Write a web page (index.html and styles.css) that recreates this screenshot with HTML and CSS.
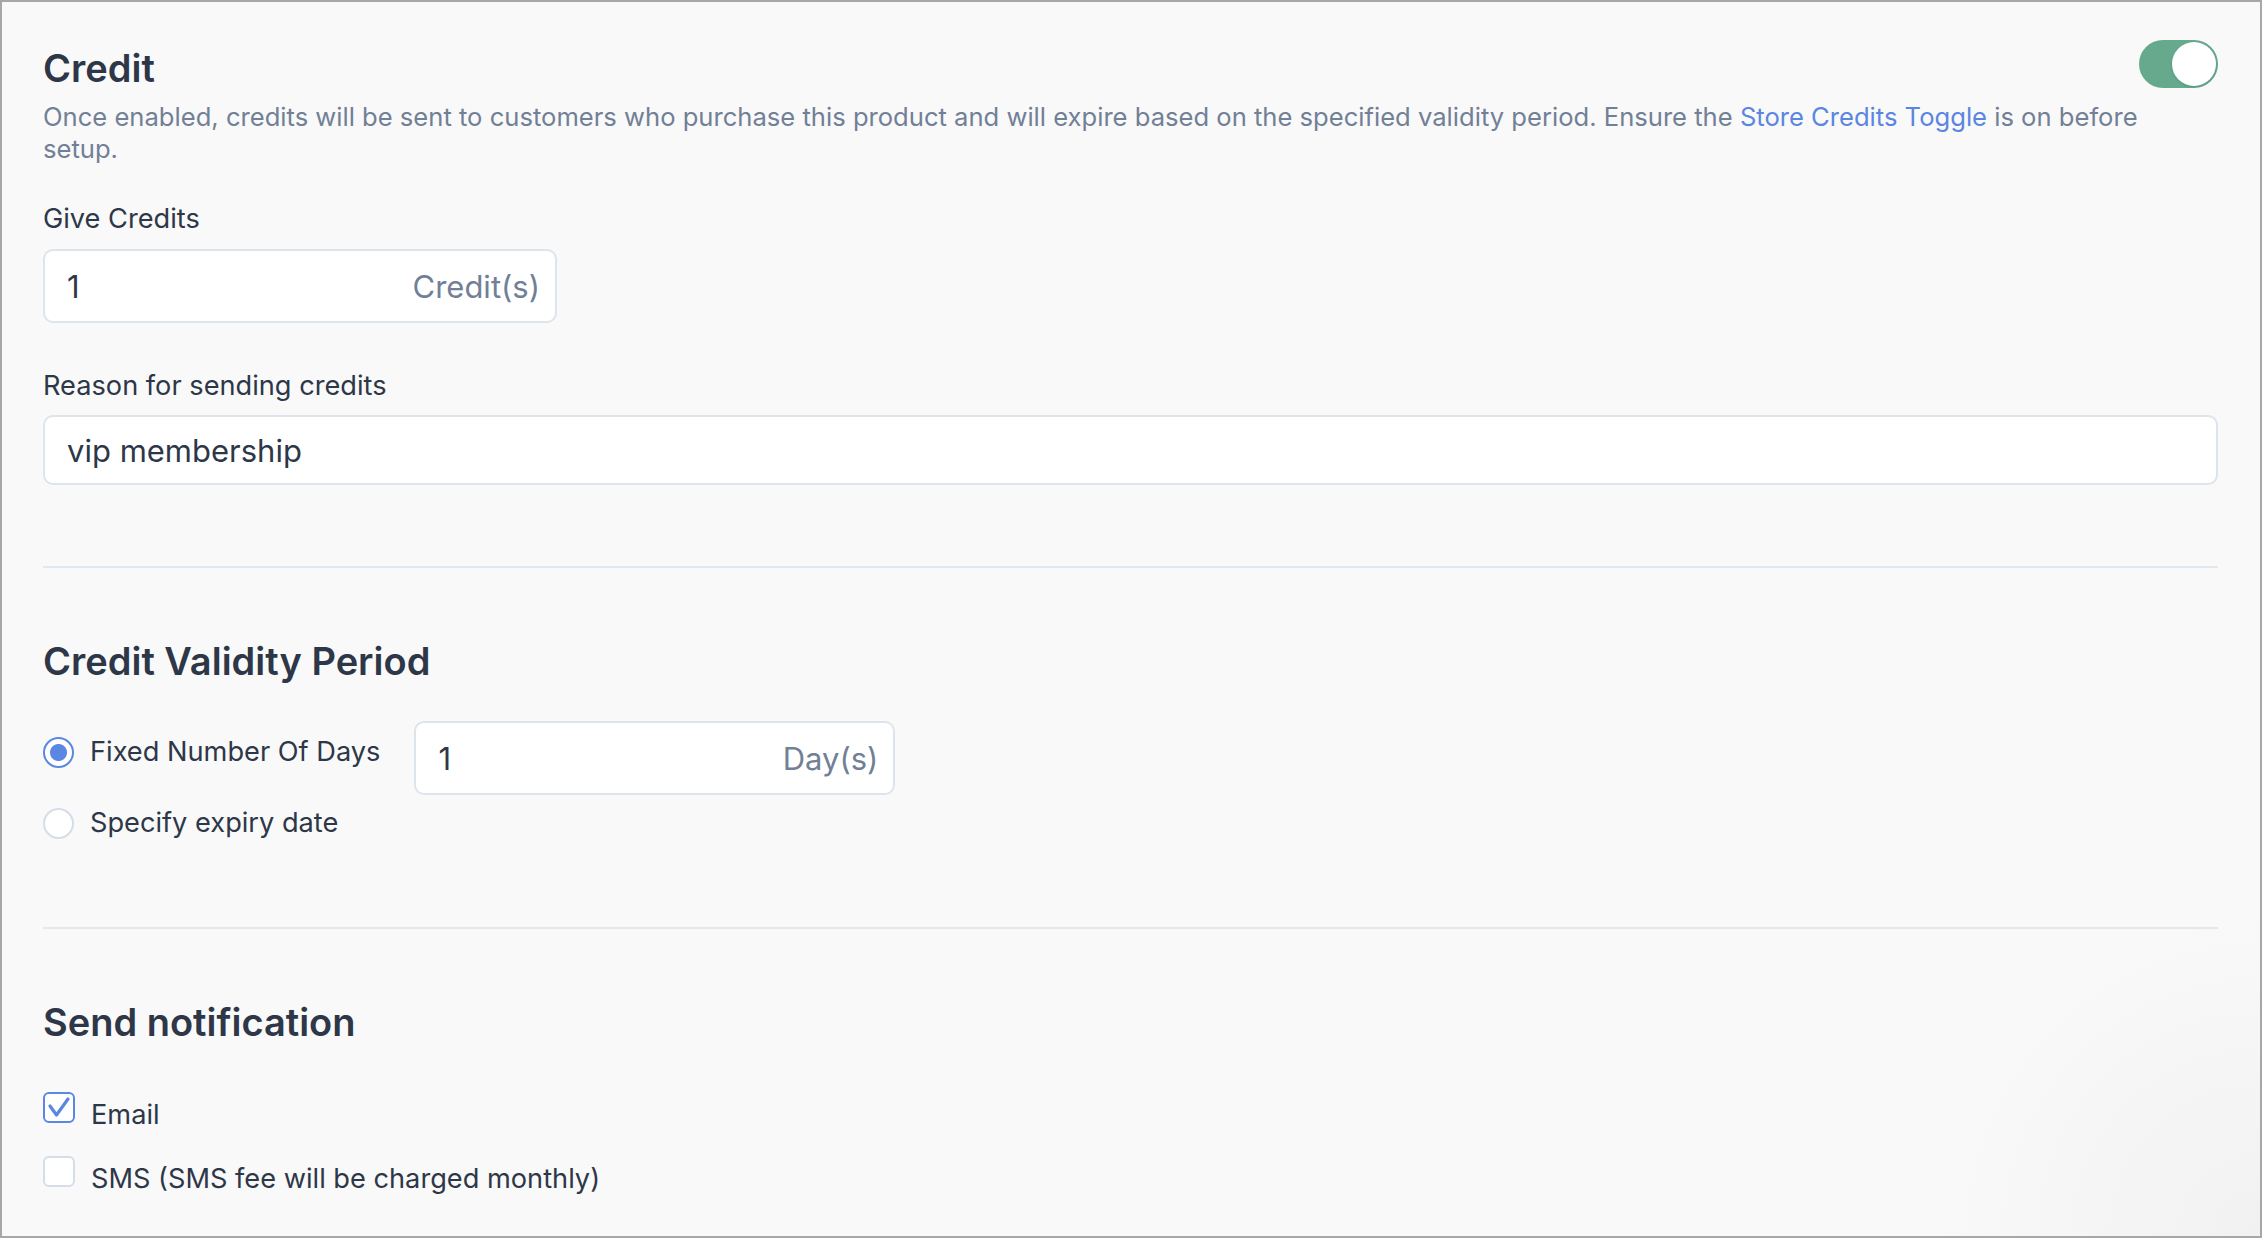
FILE: index.html
```html
<!DOCTYPE html>
<html lang="en">
<head>
  <meta charset="UTF-8" />
  <title>Product Credit Settings</title>
  <meta name="viewport" content="width=device-width, initial-scale=1" />
  <link rel="stylesheet" href="styles.css">
</head>
<body>
  <div class="panel">
    <!-- credit amount + reason -->
    <div class="section-head">
      <h2 class="section-title">Credit</h2>
      <span class="switch is-on"><span class="switch-knob"></span></span>
    </div>
    <p class="section-desc">Once enabled, credits will be sent to customers who purchase this product and will expire based on the specified validity period. Ensure the <a href="#">Store Credits Toggle</a> is on before<br>setup.</p>

    <label class="field-label label-first" for="give-credits">Give Credits</label>
    <div class="input-box input-credits">
      <input id="give-credits" type="text" value="1">
      <span class="input-suffix">Credit(s)</span>
    </div>

    <label class="field-label label-second" for="reason">Reason for sending credits</label>
    <div class="input-box input-reason">
      <input id="reason" type="text" value="vip membership">
    </div>

    <hr class="divider divider-first">

    <!-- validity period -->
    <h2 class="section-title title-spaced">Credit Validity Period</h2>
    <div class="validity-row">
      <div class="option option-inline">
        <span class="radio is-checked"></span>
        <span class="option-text">Fixed Number Of Days</span>
      </div>
      <div class="input-box input-days">
        <input type="text" value="1">
        <span class="input-suffix">Day(s)</span>
      </div>
    </div>
    <div class="option option-second">
      <span class="radio"></span>
      <span class="option-text">Specify expiry date</span>
    </div>

    <hr class="divider divider-second">

    <!-- notification channels -->
    <h2 class="section-title title-spaced">Send notification</h2>
    <div class="check-option check-first">
      <span class="checkbox is-checked">
        <svg width="28" height="27" viewBox="0 0 28 27"><path d="M5 12 L11.5 21 L23 5" fill="none" stroke="#5a87e1" stroke-width="3.2" stroke-linecap="round" stroke-linejoin="round"/></svg>
      </span>
      <span class="option-text">Email</span>
    </div>
    <div class="check-option check-second">
      <span class="checkbox"></span>
      <span class="option-text">SMS (SMS fee will be charged monthly)</span>
    </div>
  </div>
</body>
</html>
```

FILE: styles.css
```css
* { box-sizing: border-box; }
html, body { margin: 0; height: 100%; }
body {
  font-family: Inter, "Noto Sans", sans-serif;
  color: #2d3748;
  background: #f9f9f9;
}
.panel {
  height: 100vh;
  border: 2px solid #a7a7a7;
  background: radial-gradient(circle at 100% 100%, #f1f1f1 0, #f9f9f9 320px);
  padding: 38px 42px 0 41px;
}

.section-head { display: flex; justify-content: space-between; align-items: flex-start; }
.section-title { margin: 0; font-size: 38px; font-weight: 600; line-height: 46px; color: #2d3748; }
.section-head .section-title { padding: 5px 0; }
.title-spaced { margin-top: 70px; }

.switch { position: relative; flex-shrink: 0; width: 79px; height: 48px; border-radius: 24px; background: #cbd5e0; }
.switch.is-on { background: #66a98c; }
.switch-knob {
  position: absolute; top: 2px; right: 2px;
  width: 44px; height: 44px; border-radius: 50%;
  background: #fff; box-shadow: 0 1px 3px rgba(0,0,0,0.12);
}

.section-desc { margin: 5px 0 0; font-size: 25.6px; line-height: 32px; color: #718096; }
.section-desc a { color: #5a86e2; text-decoration: none; }

.field-label { display: block; font-size: 27.2px; line-height: 32px; color: #2d3748; }
.label-first { margin-top: 38px; }
.label-second { margin-top: 47px; }

.input-box {
  display: flex; align-items: center;
  height: 74px; margin-top: 14px; padding: 0 15px 0 22px;
  background: #fff; border: 2px solid #dde4ec; border-radius: 10px;
}
.input-box input {
  flex: 1; min-width: 0; padding: 0; border: 0; outline: 0;
  background: transparent; font: inherit; font-size: 31px; color: #2d3748;
}
.input-suffix { font-size: 31px; color: #718096; }
.input-credits { width: 514px; }
.input-reason { height: 70px; margin-top: 13px; }
.input-days { width: 481px; margin-top: 0; }

.divider { height: 2px; margin: 0; border: 0; background: #e2e8f0; }
.divider-first { margin-top: 81px; }
.divider-second { margin-top: 88px; }

.option { display: flex; align-items: center; gap: 16px; }
.option-text { font-size: 27.2px; line-height: 32px; color: #2d3748; }
.validity-row { display: flex; align-items: flex-start; gap: 34px; margin-top: 37px; }
.option-inline { margin-top: 15px; }
.option-second { margin-top: 12px; }

.radio {
  flex-shrink: 0; width: 31px; height: 31px; border-radius: 50%;
  border: 2px solid #d5dde7; background: #fff;
}
.radio.is-checked {
  border-color: #5a87e1;
  background: radial-gradient(circle, #5a87e1 0 8px, #fff 9px);
}

.check-option { display: flex; align-items: flex-start; gap: 16px; }
.check-option .option-text { padding-top: 7px; }
.check-first { margin-top: 47px; }
.check-second { margin-top: 25px; }
.checkbox {
  flex-shrink: 0; display: flex; align-items: center; justify-content: center;
  width: 32px; height: 31px; border-radius: 6px;
  border: 2px solid #d5dde7; background: #fff;
}
.checkbox.is-checked { border-color: #5a87e1; }
```
